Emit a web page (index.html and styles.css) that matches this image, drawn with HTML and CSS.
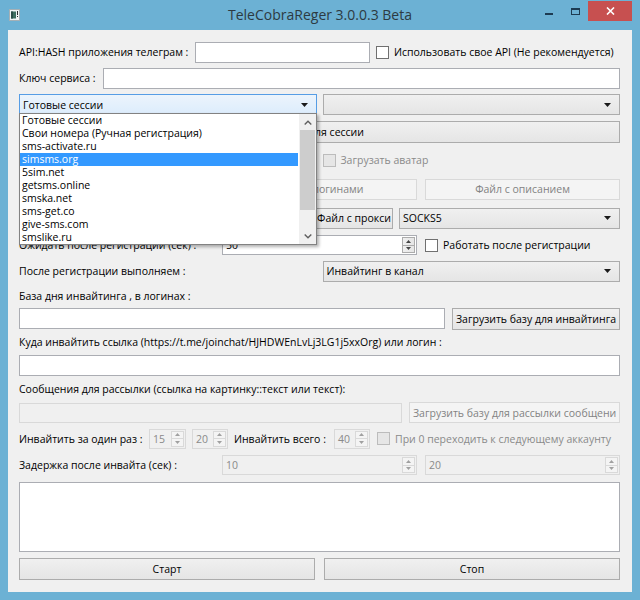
FILE: index.html
```html
<!DOCTYPE html>
<html lang="ru">
<head>
<meta charset="utf-8">
<title>TeleCobraReger 3.0.0.3 Beta</title>
<link rel="stylesheet" href="styles.css">
</head>
<body>
<div class="window">
  <div class="titlebar">
    <div class="tb-left">
      <svg class="app-icon" width="12" height="12" viewBox="0 0 12 12">
        <rect x="0.5" y="0.5" width="10" height="11" fill="#f2f4f4" stroke="#a4b0b6"/>
        <rect x="2" y="2.5" width="5" height="7" fill="#3f6f60"/>
        <rect x="2" y="2.5" width="2" height="7" fill="#2d4e48"/>
        <rect x="8" y="2" width="1" height="4" fill="#2b2b2b"/>
        <rect x="8" y="7" width="1" height="1" fill="#2b2b2b"/>
      </svg>
    </div>
    <div class="title">TeleCobraReger 3.0.0.3 Beta</div>
    <div class="caption">
      <div class="cap-btn"><span class="min-bar"></span></div>
      <div class="cap-btn"><span class="max-box"></span></div>
      <div class="cap-btn close">
        <svg width="9" height="8" viewBox="0 0 9 8"><path d="M1 0.5L8 7.5M8 0.5L1 7.5" stroke="#fff" stroke-width="1.6"/></svg>
      </div>
    </div>
  </div>

  <div class="client">
    <div class="form">
      <div class="row">
        <span class="lbl w-api">API:HASH приложения телеграм :</span>
        <div class="input w-apiinput"></div>
        <span class="check ml6"></span><span class="chk-text">Использовать свое API (Не рекомендуется)</span>
      </div>

      <div class="row">
        <span class="lbl w-key">Ключ сервиса :</span>
        <div class="input grow"></div>
      </div>

      <div class="row g2">
        <div class="combo focus"><span class="ctext">Готовые сессии</span><svg class="arrow" width="7" height="4" viewBox="0 0 7 4"><path d="M0 0h7L3.5 4z" fill="#1a1a1a"/></svg></div>
        <div class="combo"><span class="ctext"></span><svg class="arrow" width="7" height="4" viewBox="0 0 7 4"><path d="M0 0h7L3.5 4z" fill="#1a1a1a"/></svg></div>
      </div>

      <div class="row">
        <div class="btn grow h22">Папка для сессии</div>
      </div>

      <div class="row g2">
        <div class="chkrow"><span class="check"></span></div>
        <div class="chkrow"><span class="check disabled"></span><span class="chk-text dim">Загрузать аватар</span></div>
      </div>

      <div class="row g3">
        <div class="btn disabled"></div>
        <div class="btn disabled">Файл с логинами</div>
        <div class="btn disabled">Файл с описанием</div>
      </div>

      <div class="row">
        <div class="chkrow grow"><span class="check"></span></div>
        <div class="btn w-proxy">Файл с прокси</div>
        <div class="combo w-socks ml6"><span class="ctext">SOCKS5</span><svg class="arrow" width="7" height="4" viewBox="0 0 7 4"><path d="M0 0h7L3.5 4z" fill="#1a1a1a"/></svg></div>
      </div>

      <div class="row g3">
        <span class="lbl">Ожидать после регистрации (сек) :</span>
        <div class="spin">
          <span class="stext">50</span>
          <div class="sbtns">
            <span class="sb"><svg width="5" height="3" viewBox="0 0 5 3"><path d="M0 3h5L2.5 0z" fill="#444"/></svg></span>
            <span class="sb"><svg width="5" height="3" viewBox="0 0 5 3"><path d="M0 0h5L2.5 3z" fill="#444"/></svg></span>
          </div>
        </div>
        <div class="chkrow"><span class="check"></span><span class="chk-text">Работать после регистрации</span></div>
      </div>

      <div class="row g2">
        <span class="lbl">После регистрации выполняем :</span>
        <div class="combo"><span class="ctext">Инвайтинг в канал</span><svg class="arrow" width="7" height="4" viewBox="0 0 7 4"><path d="M0 0h7L3.5 4z" fill="#1a1a1a"/></svg></div>
      </div>

      <div class="row"><span class="lbl">База дня инвайтинга , в логинах :</span></div>

      <div class="row">
        <div class="input grow"></div>
        <div class="btn w-base ml7 h22">Загрузить базу для инвайтинга</div>
      </div>

      <div class="row"><span class="lbl">Куда инвайтить ссылка (https://t.me/joinchat/HJHDWEnLvLj3LG1j5xxOrg) или логин :</span></div>

      <div class="row"><div class="input grow"></div></div>

      <div class="row"><span class="lbl">Сообщения для рассылки (ссылка на картинку::текст или текст):</span></div>

      <div class="row">
        <div class="input disabled grow"></div>
        <div class="btn disabled w-mail ml7 left">Загрузить базу для рассылки сообщени</div>
      </div>

      <div class="row">
        <span class="lbl w-once">Инвайтить за один раз :</span>
        <div class="spin disabled w-s1">
          <span class="stext">15</span>
          <div class="sbtns">
            <span class="sb"><svg width="5" height="3" viewBox="0 0 5 3"><path d="M0 3h5L2.5 0z" fill="#a0a0a0"/></svg></span>
            <span class="sb"><svg width="5" height="3" viewBox="0 0 5 3"><path d="M0 0h5L2.5 3z" fill="#a0a0a0"/></svg></span>
          </div>
        </div>
        <div class="spin disabled w-s2 ml6">
          <span class="stext">20</span>
          <div class="sbtns">
            <span class="sb"><svg width="5" height="3" viewBox="0 0 5 3"><path d="M0 3h5L2.5 0z" fill="#a0a0a0"/></svg></span>
            <span class="sb"><svg width="5" height="3" viewBox="0 0 5 3"><path d="M0 0h5L2.5 3z" fill="#a0a0a0"/></svg></span>
          </div>
        </div>
        <span class="lbl w-total ml6">Инвайтить всего :</span>
        <div class="spin disabled w-s2">
          <span class="stext">40</span>
          <div class="sbtns">
            <span class="sb"><svg width="5" height="3" viewBox="0 0 5 3"><path d="M0 3h5L2.5 0z" fill="#a0a0a0"/></svg></span>
            <span class="sb"><svg width="5" height="3" viewBox="0 0 5 3"><path d="M0 0h5L2.5 3z" fill="#a0a0a0"/></svg></span>
          </div>
        </div>
        <span class="check disabled ml7"></span><span class="chk-text dim">При 0 переходить к следующему аккаунту</span>
      </div>

      <div class="row g3">
        <span class="lbl">Задержка после инвайта (сек) :</span>
        <div class="spin disabled">
          <span class="stext">10</span>
          <div class="sbtns">
            <span class="sb"><svg width="5" height="3" viewBox="0 0 5 3"><path d="M0 3h5L2.5 0z" fill="#a0a0a0"/></svg></span>
            <span class="sb"><svg width="5" height="3" viewBox="0 0 5 3"><path d="M0 0h5L2.5 3z" fill="#a0a0a0"/></svg></span>
          </div>
        </div>
        <div class="spin disabled">
          <span class="stext">20</span>
          <div class="sbtns">
            <span class="sb"><svg width="5" height="3" viewBox="0 0 5 3"><path d="M0 3h5L2.5 0z" fill="#a0a0a0"/></svg></span>
            <span class="sb"><svg width="5" height="3" viewBox="0 0 5 3"><path d="M0 0h5L2.5 3z" fill="#a0a0a0"/></svg></span>
          </div>
        </div>
      </div>

      <div class="row end"><div class="textarea"></div></div>

      <div class="row end g2b">
        <div class="btn h22">Старт</div>
        <div class="btn h22">Стоп</div>
      </div>
    </div>
  </div>

  <div class="popup">
    <div class="plist">
      <div class="pitem">Готовые сессии</div>
      <div class="pitem">Свои номера (Ручная регистрация)</div>
      <div class="pitem">sms-activate.ru</div>
      <div class="pitem sel">simsms.org</div>
      <div class="pitem">5sim.net</div>
      <div class="pitem">getsms.online</div>
      <div class="pitem">smska.net</div>
      <div class="pitem">sms-get.co</div>
      <div class="pitem">give-sms.com</div>
      <div class="pitem">smslike.ru</div>
    </div>
    <div class="pscroll">
      <div class="parrow"><svg width="8" height="5" viewBox="0 0 8 5"><polyline points="0.7,4.5 4,1.2 7.3,4.5" fill="none" stroke="#606060" stroke-width="1.4"/></svg></div>
      <div class="pthumb"></div>
      <div class="ptrack"></div>
      <div class="parrow"><svg width="8" height="5" viewBox="0 0 8 5"><polyline points="0.7,0.5 4,3.8 7.3,0.5" fill="none" stroke="#606060" stroke-width="1.4"/></svg></div>
    </div>
  </div>
</div>
</body>
</html>
```
FILE: styles.css
```css
* { box-sizing: border-box; }
html, body { margin: 0; padding: 0; }
body {
  font-family: "Open Sans", "Noto Sans", "DejaVu Sans", sans-serif;
  font-size: 10.5px;
  color: #000;
  background: #6bb0d3;
}
.window {
  position: relative;
  width: 640px;
  height: 600px;
  background: #6cb1d4;
  display: flex;
  flex-direction: column;
  overflow: hidden;
}

/* title bar */
.titlebar {
  height: 30px;
  flex: none;
  display: grid;
  grid-template-columns: 1fr auto 1fr;
  align-items: start;
}
.tb-left { display: flex; }
.app-icon { margin: 9px 0 0 9px; }
.title {
  font-size: 14px;
  line-height: 30px;
  color: #2c3a42;
  white-space: nowrap;
}
.caption {
  justify-self: end;
  display: flex;
  margin: 1px 8px 0 0;
}
.cap-btn {
  width: 26px;
  height: 20px;
  display: flex;
  align-items: center;
  justify-content: center;
}
.cap-btn.close { width: 44px; background: #c75050; }
.min-bar { width: 8px; height: 2px; background: #1d3b52; margin-top: 6px; }
.max-box {
  width: 9px;
  height: 7px;
  border: 1px solid #1d3b52;
  border-top-width: 2px;
}

/* client area */
.client {
  flex: 1;
  margin: 0 8px 8px 8px;
  background: #f0f0f0;
  padding: 9px 12px 0 11px;
}
.form {
  display: grid;
  grid-template-rows: 26px 26px 27px 28px 28px 30px 28px 26px 26px 23px 23px 24px 23px 23px 25px 27px 26px 74px 28px;
}
.row { display: flex; align-items: center; min-width: 0; }
.row.end { align-items: flex-end; }
.g2 { display: grid; grid-template-columns: 1fr 1fr; column-gap: 6px; align-items: center; }
.g2b { display: grid; grid-template-columns: 1fr 1fr; column-gap: 9px; align-items: end; }
.g3 { display: grid; grid-template-columns: 1fr 1fr 1fr; column-gap: 8px; align-items: center; }

.lbl { white-space: nowrap; flex: none; }
.w-api { width: 176px; }
.w-key { width: 84px; }
.w-once { width: 130px; }
.w-total { width: 100px; }
.grow { flex: 1; }
.ml6 { margin-left: 6px; }
.ml7 { margin-left: 7px; }

/* widgets */
.input {
  height: 21px;
  background: #fff;
  border: 1px solid #abadb3;
}
.input.disabled { background: #f0f0f0; border-color: #d9d9d9; height: 20px; }
.w-apiinput { width: 175px; flex: none; }

.check {
  width: 13px;
  height: 13px;
  flex: none;
  background: #fff;
  border: 1px solid #707070;
}
.check.disabled { background: #e6e6e6; border-color: #bcbcbc; }
.chk-text { margin-left: 5px; white-space: nowrap; }
.chk-text.dim { color: #8a8a8a; }
.chkrow { display: flex; align-items: center; }

.btn {
  height: 21px;
  display: flex;
  align-items: center;
  justify-content: center;
  background: linear-gradient(#f0f0f0, #e5e5e5);
  border: 1px solid #acacac;
  white-space: nowrap;
  overflow: hidden;
}
.btn.h22 { height: 22px; }
.btn.disabled { background: #f4f4f4; border-color: #d9d9d9; color: #838383; }
.btn.left { justify-content: flex-start; padding-left: 3px; }
.w-proxy { width: 78px; flex: none; }
.w-base { width: 168px; flex: none; }
.w-mail { width: 211px; flex: none; }

.combo {
  height: 21px;
  display: flex;
  align-items: center;
  padding: 0 8px 0 3px;
  background: linear-gradient(#f0f0f0, #e5e5e5);
  border: 1px solid #acacac;
}
.combo.focus {
  background: linear-gradient(#ecf4fc, #dcecfc);
  border-color: #569de5;
}
.w-socks { width: 221px; flex: none; }
.ctext { flex: 1; white-space: nowrap; }
.arrow { flex: none; }

.spin {
  height: 20px;
  display: flex;
  align-items: stretch;
  background: #fff;
  border: 1px solid #abadb3;
}
.stext { flex: 1; display: flex; align-items: center; padding-left: 3px; }
.sbtns {
  width: 13px;
  margin: 1px;
  display: flex;
  flex-direction: column;
  border: 1px solid #acacac;
  background: linear-gradient(90deg, #f0f0f0, #e5e5e5);
}
.sb { flex: 1; display: flex; align-items: center; justify-content: center; }
.sb + .sb { border-top: 1px solid #acacac; }
.spin.disabled { background: #f0f0f0; border-color: #d9d9d9; color: #8a8a8a; }
.spin.disabled .sbtns { border-color: #d9d9d9; background: #f4f4f4; }
.spin.disabled .sb + .sb { border-top-color: #d9d9d9; }
.w-s1 { width: 37px; flex: none; }
.w-s2 { width: 36px; flex: none; }

.textarea {
  flex: 1;
  height: 70px;
  background: #fff;
  border: 1px solid #abadb3;
}

/* dropdown popup */
.popup {
  position: absolute;
  left: 19px;
  top: 113px;
  width: 298px;
  height: 132px;
  background: #fff;
  border: 1px solid #828282;
  box-shadow: 2px 2px 3px rgba(0, 0, 0, 0.3);
  display: flex;
  z-index: 10;
}
.plist { flex: 1; overflow: hidden; }
.pitem {
  height: 13px;
  line-height: 13px;
  padding-left: 2px;
  margin-right: 1px;
  white-space: nowrap;
}
.pitem.sel { background: #3399ff; color: #fff; }
.pscroll {
  width: 17px;
  display: flex;
  flex-direction: column;
  background: #f0f0f0;
}
.parrow { height: 16px; display: flex; align-items: center; justify-content: center; }
.pthumb { height: 80px; margin: 0 1px; background: #cdcdcd; }
.ptrack { flex: 1; }
```
